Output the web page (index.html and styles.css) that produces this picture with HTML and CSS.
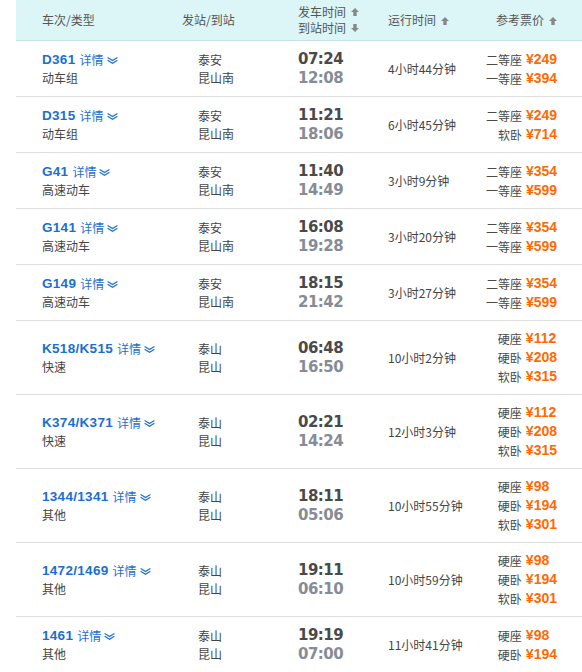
FILE: index.html
```html
<!DOCTYPE html>
<html lang="zh-CN">
<head>
<meta charset="utf-8">
<title>车次列表</title>
<link rel="stylesheet" href="styles.css">
</head>
<body>
<svg width="0" height="0" class="defs">
  <defs>
    <symbol id="chev" viewBox="0 0 11 7"><path d="M0.6 0.6 L5.5 3.6 L10.4 0.6 M0.6 3.2 L5.5 6.2 L10.4 3.2" fill="none" stroke="#1a6fd0" stroke-width="1.2"/></symbol>
    <symbol id="up" viewBox="0 0 7 7"><path d="M3.5 0 L7 3.5 H5 V7 H2 V3.5 H0 Z" fill="#888"/></symbol>
    <symbol id="down" viewBox="0 0 7 7"><path d="M3.5 7 L7 3.5 H5 V0 H2 V3.5 H0 Z" fill="#888"/></symbol>
  </defs>
</svg>
<table class="tt">
  <colgroup>
    <col class="w1"><col class="w2"><col class="w3"><col class="w4"><col class="w5">
  </colgroup>
  <thead>
    <tr>
      <th class="h1">车次/类型</th>
      <th class="h2">发站/到站</th>
      <th class="h3">
        <div class="hl">发车时间<svg class="arr"><use href="#up"/></svg></div>
        <div class="hl">到站时间<svg class="arr"><use href="#down"/></svg></div>
      </th>
      <th class="h4">运行时间<svg class="arr"><use href="#up"/></svg></th>
      <th class="h5">参考票价<svg class="arr"><use href="#up"/></svg></th>
    </tr>
  </thead>
  <tbody>
    <tr class="r2">
      <td class="c1"><div class="tn"><b>D361</b><a>详情</a><svg class="chev"><use href="#chev"/></svg></div><div>动车组</div></td>
      <td class="c2"><div>泰安</div><div>昆山南</div></td>
      <td class="c3"><div class="dep">07:24</div><div class="arv">12:08</div></td>
      <td class="c4">4小时44分钟</td>
      <td class="c5"><div class="prices"><span>二等座</span><em>¥249</em><span>一等座</span><em>¥394</em></div></td>
    </tr>
    <tr class="r2">
      <td class="c1"><div class="tn"><b>D315</b><a>详情</a><svg class="chev"><use href="#chev"/></svg></div><div>动车组</div></td>
      <td class="c2"><div>泰安</div><div>昆山南</div></td>
      <td class="c3"><div class="dep">11:21</div><div class="arv">18:06</div></td>
      <td class="c4">6小时45分钟</td>
      <td class="c5"><div class="prices"><span>二等座</span><em>¥249</em><span>软卧</span><em>¥714</em></div></td>
    </tr>
    <tr class="r2">
      <td class="c1"><div class="tn"><b>G41</b><a>详情</a><svg class="chev"><use href="#chev"/></svg></div><div>高速动车</div></td>
      <td class="c2"><div>泰安</div><div>昆山南</div></td>
      <td class="c3"><div class="dep">11:40</div><div class="arv">14:49</div></td>
      <td class="c4">3小时9分钟</td>
      <td class="c5"><div class="prices"><span>二等座</span><em>¥354</em><span>一等座</span><em>¥599</em></div></td>
    </tr>
    <tr class="r2">
      <td class="c1"><div class="tn"><b>G141</b><a>详情</a><svg class="chev"><use href="#chev"/></svg></div><div>高速动车</div></td>
      <td class="c2"><div>泰安</div><div>昆山南</div></td>
      <td class="c3"><div class="dep">16:08</div><div class="arv">19:28</div></td>
      <td class="c4">3小时20分钟</td>
      <td class="c5"><div class="prices"><span>二等座</span><em>¥354</em><span>一等座</span><em>¥599</em></div></td>
    </tr>
    <tr class="r2">
      <td class="c1"><div class="tn"><b>G149</b><a>详情</a><svg class="chev"><use href="#chev"/></svg></div><div>高速动车</div></td>
      <td class="c2"><div>泰安</div><div>昆山南</div></td>
      <td class="c3"><div class="dep">18:15</div><div class="arv">21:42</div></td>
      <td class="c4">3小时27分钟</td>
      <td class="c5"><div class="prices"><span>二等座</span><em>¥354</em><span>一等座</span><em>¥599</em></div></td>
    </tr>
    <tr class="r3">
      <td class="c1"><div class="tn"><b>K518/K515</b><a>详情</a><svg class="chev"><use href="#chev"/></svg></div><div>快速</div></td>
      <td class="c2"><div>泰山</div><div>昆山</div></td>
      <td class="c3"><div class="dep">06:48</div><div class="arv">16:50</div></td>
      <td class="c4">10小时2分钟</td>
      <td class="c5"><div class="prices"><span>硬座</span><em>¥112</em><span>硬卧</span><em>¥208</em><span>软卧</span><em>¥315</em></div></td>
    </tr>
    <tr class="r3">
      <td class="c1"><div class="tn"><b>K374/K371</b><a>详情</a><svg class="chev"><use href="#chev"/></svg></div><div>快速</div></td>
      <td class="c2"><div>泰山</div><div>昆山</div></td>
      <td class="c3"><div class="dep">02:21</div><div class="arv">14:24</div></td>
      <td class="c4">12小时3分钟</td>
      <td class="c5"><div class="prices"><span>硬座</span><em>¥112</em><span>硬卧</span><em>¥208</em><span>软卧</span><em>¥315</em></div></td>
    </tr>
    <tr class="r3">
      <td class="c1"><div class="tn"><b>1344/1341</b><a>详情</a><svg class="chev"><use href="#chev"/></svg></div><div>其他</div></td>
      <td class="c2"><div>泰山</div><div>昆山</div></td>
      <td class="c3"><div class="dep">18:11</div><div class="arv">05:06</div></td>
      <td class="c4">10小时55分钟</td>
      <td class="c5"><div class="prices"><span>硬座</span><em>¥98</em><span>硬卧</span><em>¥194</em><span>软卧</span><em>¥301</em></div></td>
    </tr>
    <tr class="r3">
      <td class="c1"><div class="tn"><b>1472/1469</b><a>详情</a><svg class="chev"><use href="#chev"/></svg></div><div>其他</div></td>
      <td class="c2"><div>泰山</div><div>昆山</div></td>
      <td class="c3"><div class="dep">19:11</div><div class="arv">06:10</div></td>
      <td class="c4">10小时59分钟</td>
      <td class="c5"><div class="prices"><span>硬座</span><em>¥98</em><span>硬卧</span><em>¥194</em><span>软卧</span><em>¥301</em></div></td>
    </tr>
    <tr class="r2">
      <td class="c1"><div class="tn"><b>1461</b><a>详情</a><svg class="chev"><use href="#chev"/></svg></div><div>其他</div></td>
      <td class="c2"><div>泰山</div><div>昆山</div></td>
      <td class="c3"><div class="dep">19:19</div><div class="arv">07:00</div></td>
      <td class="c4">11小时41分钟</td>
      <td class="c5"><div class="prices"><span>硬座</span><em>¥98</em><span>硬卧</span><em>¥194</em></div></td>
    </tr>
  </tbody>
</table>
</body>
</html>
```
FILE: styles.css
```css
html, body {
  margin: 0;
  padding: 0;
  background: #fff;
}
body {
  font-family: "Noto Sans CJK SC", "Liberation Sans", sans-serif;
  font-size: 12px;
  color: #444;
}
.defs {
  position: absolute;
  width: 0;
  height: 0;
  overflow: hidden;
}
.tt {
  margin-left: 16px;
  width: 566px;
  border-collapse: collapse;
  table-layout: fixed;
}
.w1 { width: 166px; }
.w2 { width: 106px; }
.w3 { width: 90px; }
.w4 { width: 108px; }
.w5 { width: 96px; }

.tt th {
  height: 40px;
  padding: 0;
  background: #dcf6f7;
  border-bottom: 1px solid #c2e2e3;
  font-weight: normal;
  color: #555;
  text-align: left;
  vertical-align: middle;
  line-height: 16px;
  white-space: nowrap;
}
.h1 { padding-left: 26px !important; }
.h2 { padding-left: 0; }
.h3 { padding-left: 10px !important; }
.h4 { padding-left: 10px !important; }
.h5 { padding-left: 10px !important; }
.hl { display: flex; align-items: center; height: 16px; line-height: 16px; }
.arr {
  width: 8px;
  height: 8px;
  margin-left: 5px;
  vertical-align: middle;
}
.h4 .arr, .h5 .arr { position: relative; top: -1px; }

.tt td {
  padding: 0;
  border-bottom: 1px solid #dedede;
  vertical-align: middle;
  white-space: nowrap;
}
.r2 td { height: 55px; }
.r3 td { height: 73px; }

.c1 { padding-left: 26px !important; line-height: 18px; }
.tn { display: flex; align-items: center; }
.tn b {
  font-family: "Liberation Sans", Arial, sans-serif;
  font-weight: bold;
  font-size: 13.5px;
  letter-spacing: 0.3px;
  color: #1a6fd0;
}
.tn a {
  margin-left: 4px;
  color: #1a6fd0;
}
.chev {
  width: 11px;
  height: 7px;
  margin-left: 3px;
  margin-top: 2px;
}
.c2 { padding-left: 16px !important; line-height: 18px; }
.c3 {
  padding-left: 10px !important;
  font-family: "DejaVu Sans", Verdana, sans-serif;
  font-weight: bold;
  font-size: 15px;
  letter-spacing: -0.5px;
  line-height: 19px;
}
.dep { color: #4a4a4a; }
.arv { color: #868c96; }
.c4 { padding-left: 10px !important; color: #444; }
.c5 { text-align: right; padding-right: 25px !important; }
.prices {
  display: inline-grid;
  grid-template-columns: auto auto;
  column-gap: 4px;
  line-height: 19px;
  text-align: left;
}
.prices span { justify-self: end; color: #4a4a4a; }
.prices em {
  font-style: normal;
  font-family: "Liberation Sans", Arial, sans-serif;
  font-weight: bold;
  font-size: 14px;
  color: #ff6a00;
}
```
